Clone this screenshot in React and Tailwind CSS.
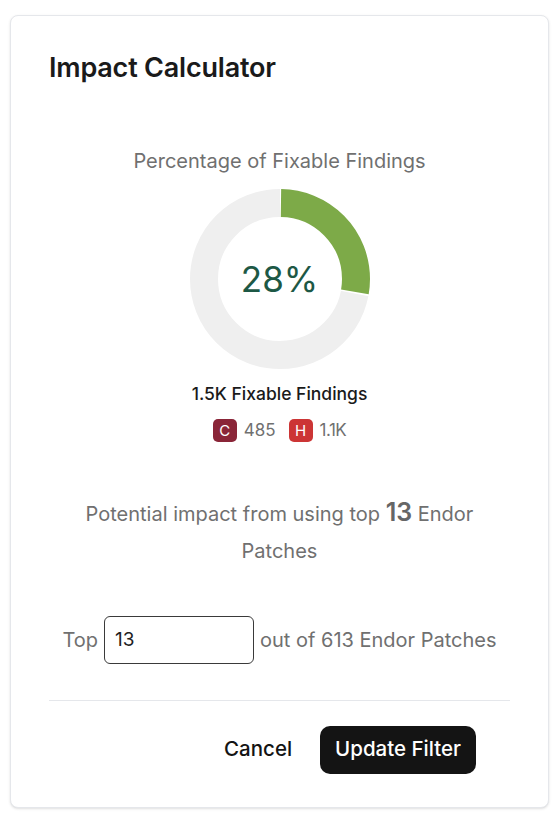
const Donut = ({ percent }) => {
  const r = 76;
  const c = 2 * Math.PI * r;
  const gap = 2.5;
  const fill = (percent / 100) * c - gap;
  return (
    <div className="relative w-[180px] h-[180px]">
      <svg width="180" height="180" viewBox="0 0 180 180" className="-rotate-90">
        <circle cx="90" cy="90" r={r} fill="none" stroke="#efefef" strokeWidth="28" />
        <circle
          cx="90"
          cy="90"
          r={r}
          fill="none"
          stroke="#ffffff"
          strokeWidth="29"
          strokeDasharray={`${fill + gap * 2} ${c}`}
          strokeDashoffset={gap}
        />
        <circle
          cx="90"
          cy="90"
          r={r}
          fill="none"
          stroke="#7daa48"
          strokeWidth="28"
          strokeDasharray={`${fill} ${c}`}
          strokeDashoffset={-1}
        />
      </svg>
      <div className="absolute inset-0 flex items-center justify-center text-[35px] text-[#1d5845]">
        {percent}%
      </div>
    </div>
  );
};

export default function App() {
  return (
    <div className="min-h-screen bg-white pt-[15px] pl-[10px] font-['Inter',sans-serif]">
      <div className="w-[539px] h-[793px] rounded-lg border border-gray-200 shadow-sm bg-white px-[38px] pt-[36px] flex flex-col">
        <h2 className="text-[27px] leading-8 font-semibold text-[#1a1a1a] tracking-[-0.2px]">
          Impact Calculator
        </h2>

        {/* Chart */}
        <div className="flex flex-col items-center mt-[63px]">
          <div className="text-[20px] leading-7 text-[#707070]">
            Percentage of Fixable Findings
          </div>
          <div className="mt-[14px]">
            <Donut percent={28} />
          </div>
          <div className="mt-[13px] text-[17.5px] leading-6 font-medium text-[#1a1a1a]">
            1.5K Fixable Findings
          </div>
          <div className="mt-[12px] flex items-center gap-[7px] text-[17px] text-[#707070]">
            <span className="w-[24px] h-[23px] rounded-[5px] bg-[#8a2538] text-white text-[15px] flex items-center justify-center">
              C
            </span>
            <span className="mr-[6px]">485</span>
            <span className="w-[24px] h-[23px] rounded-[5px] bg-[#cc3535] text-white text-[15px] flex items-center justify-center">
              H
            </span>
            <span className="tracking-[-0.5px]">1.1K</span>
          </div>
        </div>

        {/* Impact text */}
        <div className="mt-[52px] mx-auto max-w-[410px] text-center text-[20px] leading-[37px] text-[#707070]">
          Potential impact from using top{" "}
          <span className="text-[25px] leading-none font-semibold text-[#666]">13</span> Endor Patches
        </div>

        <div className="mt-[46px] flex items-center justify-center gap-[6px] text-[20px] text-[#707070]">
          <span>Top</span>
          <input
            type="text"
            defaultValue="13"
            className="w-[150px] h-[48px] rounded-[6px] border border-[#3a3a3a] px-[10px] text-[19px] text-[#222] outline-none"
          />
          <span>out of 613 Endor Patches</span>
        </div>

        <div className="mt-[36px] border-t border-gray-200" />

        <div className="mt-[25px] flex items-center justify-end gap-[28px] pr-[34px]">
          <button className="text-[20.5px] font-medium text-[#141414]">Cancel</button>
          <button className="h-[48px] px-[15px] rounded-[10px] bg-[#141414] text-white text-[20.5px] font-medium">
            Update Filter
          </button>
        </div>
      </div>
    </div>
  );
}
